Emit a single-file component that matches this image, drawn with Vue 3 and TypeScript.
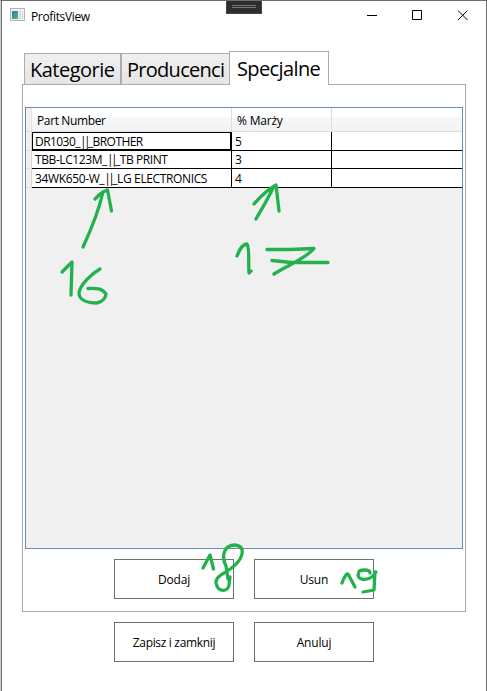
<script setup lang="ts">
interface PartMargin {
  code: string
  brand: string
  margin: number
}

const rows: PartMargin[] = [
  { code: 'DR1030', brand: 'BROTHER', margin: 5 },
  { code: 'TBB-LC123M', brand: 'TB PRINT', margin: 3 },
  { code: '34WK650-W', brand: 'LG ELECTRONICS', margin: 4 },
]

const strokes: string[] = [
  // arrow and 16
  'M83 247C90 232 98 214 103 192M95 199L99 195C102 192 105 191 107.500 190L111.500 211',
  'M62 272L72 262L71 295',
  'M100 269C91 274 80 285 79 293C79 300 87 303 97 303C103 302 106 297 106 294C102 288 96 288 88 288.500',
  // arrow and 17
  'M256 219C261 210 268 199 273 188M254 204C260 197 267 190 276 185L279 211',
  'M237 256C240 248 244 244 247 244C250 249 248 264 249 273L251 271',
  'M267 249.500H290L314 248.500C305 259 288 265 274 274M272 260.500L291 262.500H328',
  // 18
  'M203 568L210 555L213.500 569',
  'M228 579L226 566C221 556 224 545 235 545C246 546 243 557 236 564C228 573 215 575 216 583C218 593 228 592 229 585L230 577',
  // 19
  'M342 583C344 577 347 573 348 574L355 587',
  'M370 573C370 569 359 569 358.500 573C356 580 366 581 372 577L376 572M375 572L374 590L363 592',
]
</script>

<template>
  <div class="window">
    <div class="dock-handle"><i></i><i></i></div>
    <header class="titlebar">
      <svg class="app-icon" width="16" height="14" viewBox="0 0 16 14">
        <defs>
          <linearGradient id="screen" x1="0" y1="0" x2="1" y2="1">
            <stop offset="0" stop-color="#3b74ad" />
            <stop offset="1" stop-color="#54b878" />
          </linearGradient>
        </defs>
        <rect x=".5" y=".5" width="14" height="12" fill="#eef0f2" stroke="#b0b5ba" />
        <rect x="2" y="3" width="6" height="8" fill="url(#screen)" />
        <rect x="9" y="3" width="2" height="8" fill="#dadddf" />
        <rect x="12" y="3" width="1" height="8" fill="#dadddf" />
      </svg>
      <span class="title">ProfitsView</span>
      <svg class="controls" width="104" height="12" viewBox="0 0 104 12" fill="none" stroke="#000">
        <path d="M0 5.500H10M45.500 .5H54.500V9.500H45.500ZM91 .5L100.500 10M100.500 .5L91 10" />
      </svg>
    </header>

    <nav class="tabs">
      <button class="tab kategorie"><span>Kategorie</span></button>
      <button class="tab producenci"><span>Producenci</span></button>
      <button class="tab specjalne active"><span>Specjalne</span></button>
    </nav>

    <main class="panel">
      <div class="grid">
        <div class="grid-row head">
          <div class="gutter"></div>
          <div class="cell part"><span>Part Number</span></div>
          <div class="cell margin"><span>% Marży</span></div>
          <div class="cell rest"></div>
        </div>
        <div v-for="(row, i) in rows" :key="row.code" class="grid-row body" :class="'row' + i">
          <div class="gutter"></div>
          <div class="cell part" :class="{ selected: i === 0 }"><span>{{ row.code }}_<span class="bars">||</span>_{{ row.brand }}</span></div>
          <div class="cell margin"><span>{{ row.margin }}</span></div>
          <div class="cell rest"></div>
        </div>
      </div>
      <div class="buttons">
        <button class="btn"><span>Dodaj</span></button>
        <button class="btn"><span>Usun</span></button>
      </div>
    </main>

    <footer class="buttons outer">
      <button class="btn"><span class="save">Zapisz i zamknij</span></button>
      <button class="btn"><span>Anuluj</span></button>
    </footer>

    <div class="edge-ticks"></div>
    <svg class="ink" width="487" height="691" viewBox="0 0 487 691">
      <path v-for="d in strokes" :key="d" :d="d" />
    </svg>
  </div>
</template>

<style>
body { background: #fff; }
</style>

<style scoped>
* { box-sizing: border-box; }
.window {
  position: relative;
  width: 487px;
  height: 691px;
  overflow: hidden;
  border-left: 1px solid #d0d0d0;
  border-top: 1px solid #6c6c6c;
  border-right: 1px solid #6c6c6c;
  background: linear-gradient(90deg, #6c6c6c 1px, #fff 1px);
  font-family: "Open Sans", "Noto Sans", sans-serif;
  font-size: 12px;
  color: #000;
}
button { font: inherit; color: inherit; padding: 0; }
span { white-space: pre; }
.dock-handle {
  position: absolute;
  left: 225px;
  top: -1px;
  width: 36px;
  height: 14px;
  padding: 5px 5px 0;
  background: #2d2d30;
  border: 1px solid #444;
  border-top: 0;
}
.dock-handle i { display: block; height: 1px; margin-bottom: 1px; background: #777; }
.edge-ticks {
  position: absolute;
  left: 485px;
  top: 8px;
  width: 1px;
  height: 362px;
  background: repeating-linear-gradient(#222 0 1px, transparent 1px 19px);
}
.titlebar { display: flex; align-items: flex-start; height: 50px; padding: 7px 0 0 9px; }
.title { margin-left: 5px; line-height: 18px; letter-spacing: -0.35px; width: 336px; }
.controls { margin-top: 2px; }
.tabs { display: flex; align-items: flex-end; height: 34px; padding-left: 23px; position: relative; z-index: 1; margin-bottom: -1px; }
.tab {
  height: 32px;
  border: 1px solid #acacac;
  background: linear-gradient(#f0f0f0, #e5e5e5);
  font-size: 20px;
  line-height: 31px;
  text-align: left;
  padding-left: 5px;
}
.kategorie { width: 97px; letter-spacing: -0.5px; }
.producenci { width: 109px; margin-right: -1px; letter-spacing: -0.72px; }
.specjalne { width: 100px; padding-left: 7px; letter-spacing: -0.62px; }
.tab.active { height: 34px; background: #fff; border-bottom: 0; line-height: 34px; }
.panel { margin-left: 21px; width: 444px; height: 528px; border: 1px solid #acacac; padding: 22px 2px 0; }
.grid { width: 438px; height: 442px; border: 1px solid #688caf; background: #f0f0f0; }
.grid-row { display: flex; height: 18px; }
.grid-row.head { height: 24px; background: linear-gradient(#fff 0 40%, #f7f8fa 41%, #f1f2f4); border-bottom: 1px solid #dcdee0; }
.grid-row.row0, .grid-row.row2 { height: 19px; }
.gutter { width: 6px; border-right: 1px solid #d5d5d5; border-bottom: 1px solid #ddd; background: #f0f0f0; }
.head .gutter { border-color: #e0e0e0; border-bottom: 0; }
.cell { border-right: 1px solid #000; border-bottom: 1px solid #000; background: #fff; line-height: 17px; padding-left: 3px; }
.row0 .cell, .row2 .cell { line-height: 19px; }
.head .cell { background: none; border-bottom: 0; border-color: #dcdee0; line-height: 26px; padding-left: 5px; }
.part { width: 200px; letter-spacing: -0.37px; }
.row0 .part { letter-spacing: -0.56px; }
.row1 .part { letter-spacing: -0.41px; }
.body .bars { letter-spacing: -2.6px; }
.margin { width: 100px; }
.head .margin { letter-spacing: -0.2px; }
.rest { flex: 1; border-right: 0; }
.selected { box-shadow: inset 1px 1px #000, inset -1px -1px #000; }
.buttons { display: flex; gap: 20px; padding: 10px 0 0 89px; }
.buttons.outer { padding: 10px 0 0 113px; }
.btn { width: 120px; height: 40px; background: #fff; border: 1px solid #707070; line-height: 40px; text-align: center; letter-spacing: -0.2px; }
.save { letter-spacing: -0.32px; }
.ink { position: absolute; left: -1px; top: -1px; pointer-events: none; }
.ink path { fill: none; stroke: #22b14c; stroke-width: 3.300; stroke-linecap: round; stroke-linejoin: round; }
</style>
